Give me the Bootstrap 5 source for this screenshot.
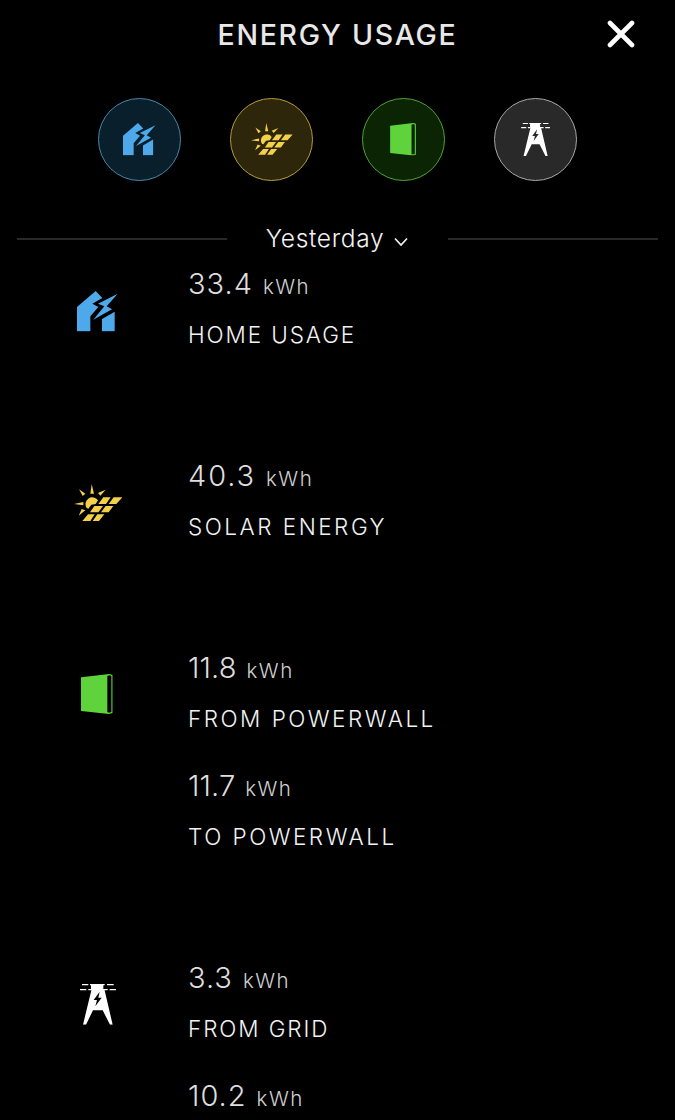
<!DOCTYPE html>
<html lang="en">
<head>
<meta charset="utf-8">
<meta name="viewport" content="width=device-width, initial-scale=1">
<title>Energy Usage</title>
<link href="https://cdn.jsdelivr.net/npm/bootstrap@5.3.0/dist/css/bootstrap.min.css" rel="stylesheet">
<style>
  body { background: #000; color: #f2f2f2; font-family: Inter, "Liberation Sans", sans-serif; font-weight: 300; }
  .screen { width: 675px; height: 1120px; }
  .topbar { height: 68px; }
  .topbar h1 { font-size: 28.5px; font-weight: 500; letter-spacing: 1.7px; line-height: 69px; color: #e8e8e8; }
  .close-btn { width: 28px; height: 28px; top: 20px; right: 40px; }
  .filters { gap: 49px; padding-top: 30px; height: 153px; }
  .filter { width: 83px; height: 83px; border: 1px solid; }
  .home { color: #4ea9ea; } .solar { color: #f2d04a; } .wall { color: #5fd33c; } .grid-src { color: #fff; }
  .filter.home { background: #0a1f2c; border-color: #4a86ab; }
  .filter.solar { background: #2d260a; border-color: #b39c3c; }
  .filter.wall { background: #0b2504; border-color: #4ea235; padding-right: 2px; }
  .filter.grid-src { background: #292929; border-color: #a8a8a8; }
  .period { height: 37px; padding: 0 17px 1px; }
  .rule { width: 210px; height: 2px; background: #292929; }
  .period-btn { font-size: 24.5px; line-height: 32px; letter-spacing: .7px; padding-bottom: 3px; gap: 9px; }
  .source { padding-bottom: 74px; }
  .source-icon { width: 188px; height: 107px; padding-left: 7px; }
  .source-icon.solar { padding-left: 8px; }
  .source-icon.wall { padding: 0 0 3px 6px; }
  .source-icon.grid-src { padding-bottom: 2px; }
  .entry { height: 118px; }
  .value { font-size: 29px; line-height: 52px; letter-spacing: 1px; color: #dedede; }
  .value.spread { letter-spacing: 1.9px; }
  .value.tight { letter-spacing: .1px; }
  .unit { font-size: 20.5px; letter-spacing: 1.5px; margin-left: 10px; color: #cfcfcf; }
  .caption-text { font-size: 22.5px; line-height: 44px; letter-spacing: 1.9px; }
  .caption-text.spread { letter-spacing: 2.5px; }
</style>
</head>
<body>
<svg class="d-none" xmlns="http://www.w3.org/2000/svg">
  <symbol id="i-home" viewBox="51 32 122 122"><path fill="currentColor" d="M51 153V80L107 32L127 53L97 70L115 80L91 108V153ZM173 40L114 70L133 78L100 118L156 87L140 78ZM126 153V116L164 94V153Z"/></symbol>
  <symbol id="i-solar" viewBox="43 27 146 115"><path fill="currentColor" d="M96 27L92 56H103ZM58 43L69 63L77 56ZM138 44L115 54L122 62ZM43 87L71 81V91ZM57 122L66 102L77 106ZM81 99A19.500 19.500 0 1 1 115 76L108 87L95 89L86 101ZM131 67H153L139 87H116ZM162 67H188L170 87H147ZM104 93H130L116 112H91ZM138 93H161L147 112H124ZM85 118H105L92 138H68ZM113 118H134L118 138H99Z"/></symbol>
  <symbol id="i-wall" viewBox="47 43 95 120"><path fill="currentColor" fill-rule="evenodd" d="M47 53L132 43L142 46V160L131 163L47 154ZM126 49V157L131 159L138 157V49L132 47Z"/></symbol>
  <symbol id="i-grid" viewBox="45 43 108 122"><path fill="currentColor" fill-rule="evenodd" d="M78 43H115V58H118L143 165H135L113 122H84L63 165H54L80 58H78ZM104 66L86 91H96L91 110L110 84H100Z"/><path stroke="currentColor" stroke-width="4" d="M51 45H70M75 45H119M126 45H146M45 60H64M70 60H81M115 60H128M134 60H153"/></symbol>
</svg>
<main class="screen overflow-hidden position-relative">
  <header class="topbar text-center">
    <h1 class="m-0">ENERGY USAGE</h1>
    <button class="close-btn btn p-0 border-0 position-absolute d-flex" aria-label="Close">
      <svg width="28" height="28" viewBox="0 0 28 28"><path d="M3 3L25 25M25 3L3 25" stroke="#fff" stroke-width="4.6" stroke-linecap="round"/></svg>
    </button>
  </header>
  <nav class="filters d-flex justify-content-center" aria-label="Sources">
    <a class="filter home rounded-circle d-flex align-items-center justify-content-center"><svg width="32.5" height="32.5"><use href="#i-home"/></svg></a>
    <a class="filter solar rounded-circle d-flex align-items-center justify-content-center"><svg width="42" height="33"><use href="#i-solar"/></svg></a>
    <a class="filter wall rounded-circle d-flex align-items-center justify-content-center"><svg width="26" height="32.5"><use href="#i-wall"/></svg></a>
    <a class="filter grid-src rounded-circle d-flex align-items-center justify-content-center"><svg width="29.5" height="33"><use href="#i-grid"/></svg></a>
  </nav>
  <div class="period d-flex justify-content-between align-items-center">
    <span class="rule"></span>
    <span class="period-btn d-flex align-items-center">Yesterday
      <svg width="16" height="10" viewBox="0 0 16 10" class="mt-2"><path d="M2 1.5L8 8L14 1.5" fill="none" stroke="#f2f2f2" stroke-width="1.7"/></svg></span>
    <span class="rule"></span>
  </div>
  <section class="source d-flex">
    <div class="source-icon home d-flex align-items-center justify-content-center"><svg width="40.7" height="40.7"><use href="#i-home"/></svg></div>
    <div>
      <div class="entry"><div class="value">33.4<span class="unit">kWh</span></div><div class="caption-text">HOME USAGE</div></div>
    </div>
  </section>
  <section class="source d-flex">
    <div class="source-icon solar d-flex align-items-center justify-content-center"><svg width="48.7" height="38.3"><use href="#i-solar"/></svg></div>
    <div>
      <div class="entry"><div class="value spread">40.3<span class="unit">kWh</span></div><div class="caption-text spread">SOLAR ENERGY</div></div>
    </div>
  </section>
  <section class="source d-flex">
    <div class="source-icon wall d-flex align-items-center justify-content-center"><svg width="31.7" height="40"><use href="#i-wall"/></svg></div>
    <div>
      <div class="entry"><div class="value tight">11.8<span class="unit">kWh</span></div><div class="caption-text spread">FROM POWERWALL</div></div>
      <div class="entry"><div class="value tight">11.7<span class="unit">kWh</span></div><div class="caption-text spread">TO POWERWALL</div></div>
    </div>
  </section>
  <section class="source d-flex">
    <div class="source-icon grid-src d-flex align-items-center justify-content-center"><svg width="36" height="40.7"><use href="#i-grid"/></svg></div>
    <div>
      <div class="entry"><div class="value">3.3<span class="unit">kWh</span></div><div class="caption-text">FROM GRID</div></div>
      <div class="entry"><div class="value">10.2<span class="unit">kWh</span></div></div>
    </div>
  </section>
</main>
<script src="https://cdn.jsdelivr.net/npm/bootstrap@5.3.0/dist/js/bootstrap.bundle.min.js"></script>
</body>
</html>
